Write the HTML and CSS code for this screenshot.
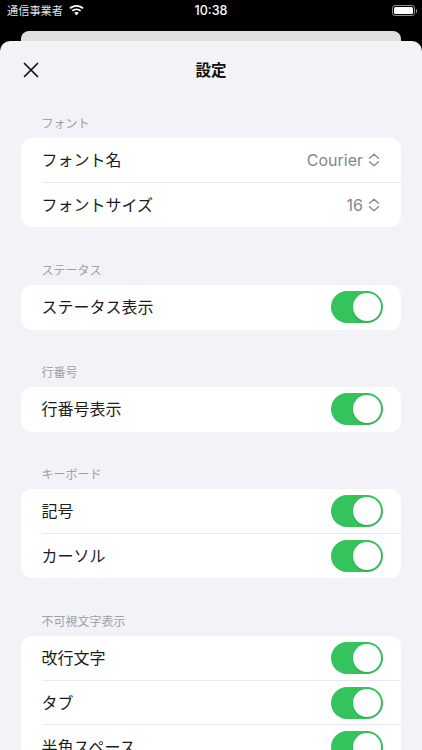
FILE: index.html
```html
<!DOCTYPE html>
<html lang="ja">
<head>
<meta charset="utf-8">
<title>設定</title>
<link rel="stylesheet" href="styles.css">
</head>
<body>
<div class="screen">
  <header class="status">
    <div class="status-left">
      <span class="carrier">通信事業者</span>
      <svg class="wifi" width="15" height="11" viewBox="0 0 15 11"><path d="M7.500 0C4.800 0 2.300 1 .4 2.800l1.200 1.300C3.200 2.600 5.200 1.700 7.500 1.700s4.300.9 5.900 2.400l1.200-1.300C12.700 1 10.200 0 7.500 0z" fill="#fff"/><path d="M7.500 3.400c-1.800 0-3.500.7-4.700 1.900L4 6.600c.9-.9 2.100-1.400 3.500-1.400s2.600.5 3.500 1.400l1.200-1.300C11 4.100 9.300 3.400 7.500 3.400z" fill="#fff"/><path d="M7.500 6.900c-.9 0-1.700.3-2.300.9l2.300 2.700 2.300-2.700c-.6-.6-1.400-.9-2.300-.9z" fill="#fff"/></svg>
    </div>
    <span class="time">10:38</span>
    <div class="battery"><span class="battery-fill"></span></div>
  </header>
  <div class="back-card"></div>
  <main class="sheet">
    <div class="nav">
      <svg class="close" width="16" height="16" viewBox="0 0 16 16"><path d="M1.500 1.500l13 13M14.500 1.500l-13 13" stroke="#111" stroke-width="1.700" stroke-linecap="round" fill="none"/></svg>
      <h1 class="title">設定</h1>
    </div>

    <section class="group double">
      <h2 class="label">フォント</h2>
      <div class="card">
        <div class="row picker"><span class="name">フォント名</span><span class="value">Courier
          <svg class="chev" width="12" height="14" viewBox="0 0 12 14"><path d="M1.500 5.200L6 1.300l4.500 3.900M1.500 8.800L6 12.700l4.500-3.900" stroke="#85858b" stroke-width="1.300" stroke-linecap="round" stroke-linejoin="round" fill="none"/></svg></span></div>
        <div class="row picker"><span class="name">フォントサイズ</span><span class="value">16
          <svg class="chev" width="12" height="14" viewBox="0 0 12 14"><path d="M1.500 5.200L6 1.300l4.500 3.900M1.500 8.800L6 12.700l4.500-3.900" stroke="#85858b" stroke-width="1.300" stroke-linecap="round" stroke-linejoin="round" fill="none"/></svg></span></div>
      </div>
    </section>

    <section class="group">
      <h2 class="label">ステータス</h2>
      <div class="card">
        <div class="row"><span class="name">ステータス表示</span><span class="switch"></span></div>
      </div>
    </section>

    <section class="group">
      <h2 class="label">行番号</h2>
      <div class="card">
        <div class="row"><span class="name">行番号表示</span><span class="switch"></span></div>
      </div>
    </section>

    <section class="group double">
      <h2 class="label">キーボード</h2>
      <div class="card">
        <div class="row"><span class="name">記号</span><span class="switch"></span></div>
        <div class="row"><span class="name">カーソル</span><span class="switch"></span></div>
      </div>
    </section>

    <section class="group">
      <h2 class="label">不可視文字表示</h2>
      <div class="card">
        <div class="row"><span class="name">改行文字</span><span class="switch"></span></div>
        <div class="row"><span class="name">タブ</span><span class="switch"></span></div>
        <div class="row"><span class="name">半角スペース</span><span class="switch"></span></div>
      </div>
    </section>
  </main>
</div>
</body>
</html>
```

FILE: styles.css
```css
* { box-sizing: border-box; }
html, body { margin: 0; padding: 0; }
body {
  width: 422px;
  height: 750px;
  overflow: hidden;
  background: #000;
  font-family: "Noto Sans CJK JP", "Noto Sans", sans-serif;
}
.screen { width: 422px; height: 750px; overflow: hidden; display: flex; flex-direction: column; }
.status {
  height: 21px;
  flex: none;
  position: relative;
  display: flex;
  align-items: center;
  justify-content: space-between;
  padding: 0 7px;
  color: #fff;
}
.status-left { display: flex; align-items: center; gap: 6px; }
.carrier { font-size: 11.200px; line-height: 23px; color: #e0e0e0; }
.wifi { display: block; }
.time {
  position: absolute;
  left: 0;
  right: 0;
  top: 0;
  line-height: 22px;
  text-align: center;
  font-family: Inter, "Liberation Sans", sans-serif;
  font-size: 12.500px;
  font-weight: 500;
}
.battery {
  position: relative;
  width: 23px;
  height: 11px;
  border: 1px solid #8e8e8e;
  border-radius: 3px;
  padding: 1px;
}
.battery::after {
  content: "";
  position: absolute;
  right: -3px;
  top: 2.500px;
  width: 1.500px;
  height: 4px;
  background: #8e8e8e;
  border-radius: 0 1px 1px 0;
}
.battery-fill { display: block; height: 100%; background: #fff; border-radius: 1.500px; }
.back-card {
  flex: none;
  height: 10px;
  margin: 10px 21px 0;
  background: #e0e0e0;
  border-radius: 8px 8px 0 0;
}
.sheet {
  flex: 1;
  background: #f2f2f7;
  border-radius: 10px 10px 0 0;
  padding: 0 21px;
  overflow: hidden;
}
.nav {
  height: 59px;
  position: relative;
  display: flex;
  align-items: center;
  justify-content: center;
  padding-bottom: 4px;
}
.close { position: absolute; left: 2px; top: 21px; }
.title { margin: 0; font-size: 15.500px; font-weight: 700; color: #111; }
.group { margin-bottom: 19.500px; }
.group.double { margin-bottom: 20px; }
.label {
  margin: 0;
  padding-left: 20.500px;
  height: 38px;
  line-height: 45px;
  font-size: 12px;
  font-weight: 400;
  color: #a0a0a5;
}
.card { background: #fff; border-radius: 11px; overflow: hidden; }
.row {
  height: 44.500px;
  margin-left: 21px;
  padding-right: 18px;
  display: flex;
  align-items: center;
  justify-content: space-between;
  font-size: 16px;
  color: #1c1c1e;
  box-shadow: inset 0 -1px 0 #e9e9ec;
}
.row:last-child { box-shadow: none; }
.row.picker { padding-right: 21px; }
.name { margin: 0 0 2px -0.500px; }
.value {
  display: inline-flex;
  align-items: center;
  gap: 5px;
  font-family: Inter, "Liberation Sans", sans-serif;
  font-size: 16px;
  color: #85858b;
}
.chev { display: block; }
.switch {
  width: 52px;
  height: 32px;
  border-radius: 16px;
  background: #34c35c;
  position: relative;
  display: block;
}
.switch::after {
  content: "";
  position: absolute;
  right: 2px;
  top: 2px;
  width: 28px;
  height: 28px;
  border-radius: 50%;
  background: #fff;
  box-shadow: 0 1px 2px rgba(0, 0, 0, .15);
}
```
